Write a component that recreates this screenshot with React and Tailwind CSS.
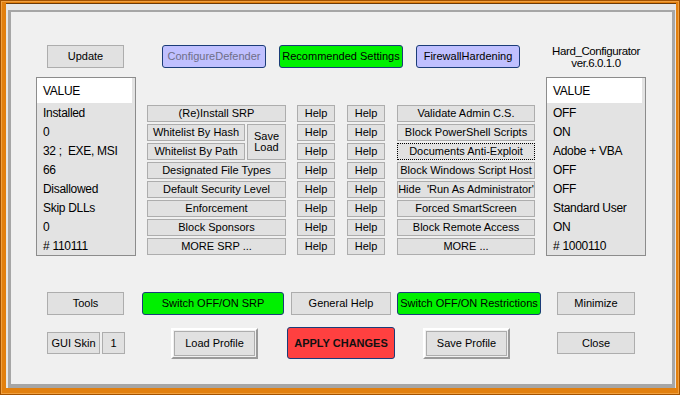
import React from "react";

const Btn = ({ children, className = "" }) => (
  <button
    type="button"
    className={`flex shrink-0 items-center justify-center border border-[#adadad] bg-[#e1e1e1] text-[11px] leading-none text-black ${className}`}
  >
    {children}
  </button>
);

const Pill = ({ children, className = "" }) => (
  <button
    type="button"
    className={`flex shrink-0 items-center justify-center rounded-[3px] border border-[#1b3c78] text-[11px] leading-none ${className}`}
  >
    {children}
  </button>
);

// raised 3D button used for the profile actions
const RaisedBtn = ({ children, className = "" }) => (
  <div
    className={`flex h-[31px] w-[87px] shrink-0 border-2 border-t-white border-l-white border-r-[#9a9a9a] border-b-[#9a9a9a] p-[1px] ${className}`}
  >
    <button
      type="button"
      className="flex flex-1 items-center justify-center border border-[#adadad] bg-[#e1e1e1] text-[11px] leading-none text-black"
    >
      {children}
    </button>
  </div>
);

const ValueList = ({ rows }) => (
  <div className="flex h-[179px] w-[100px] shrink-0 flex-col border border-[#8c8c8c] bg-[#e3e3e3] text-[12px] tracking-[-0.3px] text-black">
    <div className="mr-[3px] flex h-[25px] items-center bg-white pl-[6px]">VALUE</div>
    {rows.map((r, i) => (
      <div key={i} className="flex h-[19px] items-center whitespace-pre pl-[6px]">
        {r}
      </div>
    ))}
  </div>
);

const leftValues = ["Installed", "0", "32 ;  EXE, MSI", "66", "Disallowed", "Skip DLLs", "0", "# 110111"];
const rightValues = ["OFF", "ON", "Adobe + VBA", "OFF", "OFF", "Standard User", "ON", "# 1000110"];

const srpButtons = ["Designated File Types", "Default Security Level", "Enforcement", "Block Sponsors", "MORE SRP ..."];
const restrictionButtons = [
  "Validate Admin C.S.",
  "Block PowerShell Scripts",
  "Documents Anti-Exploit",
  "Block Windows Script Host",
  "Hide  'Run As Administrator'",
  "Forced SmartScreen",
  "Block Remote Access",
  "MORE ...",
];

export default function App() {
  return (
    <div className="flex h-[395px] w-[680px] flex-col bg-[#e2800f] pt-[3px] pl-[6px] pr-[4px] pb-[7px] font-['Liberation_Sans',Arial,sans-serif] shadow-[inset_0_0_0_1px_#a35200,inset_0_0_0_2px_#f0a040]">
      <div className="flex flex-1 flex-col border-t border-[#6b3a08] bg-[#e6e6e6] pt-[6px] pl-[2px] pr-[1px]">
        <div className="flex flex-1 flex-col border-[3px] border-t-2 border-b-4 border-[#a6a6a6] bg-[#f0f0f0] pt-[33px] text-black">
          {/* top row */}
          <div className="flex h-[23px] items-stretch">
            <Btn className="ml-[36px] w-[77px]">Update</Btn>
            <Pill className="ml-[38px] w-[104px] bg-[#c0c0ff] text-[#6e6e88]">ConfigureDefender</Pill>
            <Pill className="ml-[13px] w-[124px] bg-[#00f000] text-black">Recommended Settings</Pill>
            <Pill className="ml-[13px] w-[104px] bg-[#c0c0ff] text-black">FirewallHardening</Pill>
            <div className="ml-[26px] flex w-[100px] flex-col items-center justify-center text-[11.5px] leading-[12px] tracking-[-0.4px]">
              <span>Hard_Configurator</span>
              <span>ver.6.0.1.0</span>
            </div>
          </div>

          {/* lists and option buttons */}
          <div className="mt-[9px] flex items-start">
            <div className="ml-[25px]">
              <ValueList rows={leftValues} />
            </div>

            <div className="ml-[11px] mt-[28px] flex w-[139px] flex-col gap-[2px]">
              <Btn className="h-[17px] w-full">(Re)Install SRP</Btn>
              <div className="flex gap-[2px]">
                <div className="flex w-[98px] flex-col gap-[2px]">
                  <Btn className="h-[17px] w-full">Whitelist By Hash</Btn>
                  <Btn className="h-[17px] w-full">Whitelist By Path</Btn>
                </div>
                <Btn className="h-[36px] w-[39px] flex-col leading-[13px]">
                  <span>Save</span>
                  <span>Load</span>
                </Btn>
              </div>
              {srpButtons.map((t) => (
                <Btn key={t} className="h-[17px] w-full">
                  {t}
                </Btn>
              ))}
            </div>

            <div className="ml-[11px] mt-[28px] flex w-[38px] flex-col gap-[2px]">
              {Array.from({ length: 8 }).map((_, i) => (
                <Btn key={i} className="h-[17px] w-full">
                  Help
                </Btn>
              ))}
            </div>

            <div className="ml-[12px] mt-[28px] flex w-[38px] flex-col gap-[2px]">
              {Array.from({ length: 8 }).map((_, i) => (
                <Btn key={i} className="h-[17px] w-full">
                  Help
                </Btn>
              ))}
            </div>

            <div className="ml-[12px] mt-[28px] flex w-[138px] flex-col gap-[2px]">
              {restrictionButtons.map((t) =>
                t === "Documents Anti-Exploit" ? (
                  <button
                    key={t}
                    type="button"
                    className="flex h-[17px] w-full items-center justify-center border border-dotted border-black bg-[#e1e1e1] text-[11px] leading-none text-black"
                  >
                    {t}
                  </button>
                ) : (
                  <Btn key={t} className="h-[17px] w-full whitespace-pre">
                    {t}
                  </Btn>
                )
              )}
            </div>

            <div className="ml-[11px]">
              <ValueList rows={rightValues} />
            </div>
          </div>

          {/* switches row */}
          <div className="mt-[36px] flex h-[23px] items-stretch">
            <Btn className="ml-[36px] w-[77px]">Tools</Btn>
            <Pill className="ml-[18px] w-[142px] bg-[#00f000] text-black">Switch OFF/ON SRP</Pill>
            <Btn className="ml-[7px] w-[100px]">General Help</Btn>
            <Pill className="ml-[6px] w-[144px] bg-[#00f000] text-black">Switch OFF/ON Restrictions</Pill>
            <Btn className="ml-[16px] w-[78px]">Minimize</Btn>
          </div>

          {/* profile row */}
          <div className="mt-[12px] flex h-[32px] items-center">
            <Btn className="ml-[36px] h-[22px] w-[53px]">GUI Skin</Btn>
            <Btn className="ml-[2px] h-[22px] w-[23px]">1</Btn>
            <RaisedBtn className="ml-[46px]">Load Profile</RaisedBtn>
            <Pill className="ml-[29px] h-[32px] w-[108px] bg-[#ff4040] text-[10.5px] font-bold text-[#111]">
              APPLY CHANGES
            </Pill>
            <RaisedBtn className="ml-[28px]">Save Profile</RaisedBtn>
            <Btn className="ml-[47px] h-[22px] w-[78px]">Close</Btn>
          </div>
        </div>
      </div>
    </div>
  );
}
